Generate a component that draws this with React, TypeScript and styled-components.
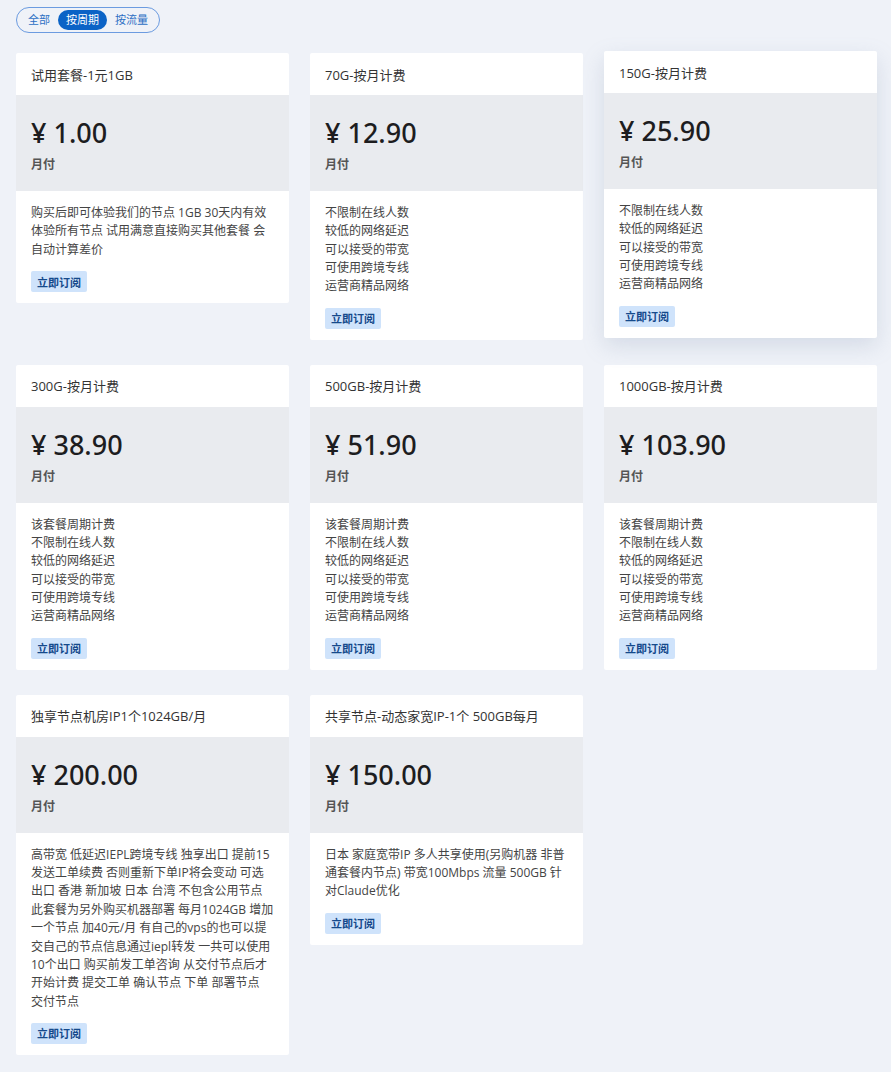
import React from "react";
import styled, { createGlobalStyle } from "styled-components";

const Global = createGlobalStyle`
  html, body { margin: 0; padding: 0; background: #eff2f8; }
  body { font-family: "Segoe UI", "Open Sans", "Noto Sans CJK SC", sans-serif; color: #333; }
  * { box-sizing: border-box; }
`;

const Page = styled.div`
  padding: 7px 14px 16px 16px;
  min-height: 1072px;
`;

const Tabs = styled.div`
  display: inline-flex;
  align-items: center;
  height: 26px;
  padding: 0 3px;
  border: 1px solid #6b9be0;
  border-radius: 13px;
`;

const Tab = styled.button<{ $active?: boolean }>`
  border: none;
  height: 20px;
  padding: 0 8px;
  border-radius: 10px;
  font-family: inherit;
  font-size: 11px;
  line-height: 20px;
  cursor: pointer;
  background: ${(p) => (p.$active ? "#0b63c6" : "transparent")};
  color: ${(p) => (p.$active ? "#fff" : "#2c6fc4")};
`;

const Grid = styled.div`
  margin-top: 20px;
  display: grid;
  grid-template-columns: repeat(3, 273px);
  column-gap: 21px;
  row-gap: 25px;
  align-items: start;
`;

const Card = styled.div<{ $raised?: boolean }>`
  background: #fff;
  border-radius: 2px;
  overflow: hidden;
  transform: ${(p) => (p.$raised ? "translateY(-2px)" : "none")};
  box-shadow: ${(p) =>
    p.$raised ? "0 8px 22px rgba(120, 135, 170, 0.22)" : "none"};
`;

const Header = styled.div`
  height: 42px;
  display: flex;
  align-items: center;
  padding: 0 15px;
  font-size: 13px;
  color: #333;
`;

const PriceBox = styled.div`
  background: #e9ebef;
  padding: 20px 15px 17px;
`;

const Price = styled.div`
  font-family: "Noto Sans", "Open Sans", sans-serif;
  font-size: 27px;
  line-height: 36px;
  color: #1d1d1f;
  font-weight: 500;
`;

const Cycle = styled.div`
  margin-top: 5px;
  font-size: 12px;
  line-height: 18px;
  font-weight: 600;
  color: #555;
`;

const Body = styled.div`
  padding: 13px 15px 11px;
`;

const Desc = styled.div`
  font-size: 12px;
  line-height: 18.35px;
  color: #444;
  white-space: pre-line;
`;

const Subscribe = styled.button`
  margin-top: 12px;
  display: block;
  height: 21px;
  padding: 0 6px;
  border: none;
  border-radius: 2px;
  background: #cfe3fb;
  color: #154a8c;
  font-family: inherit;
  font-size: 11px;
  font-weight: 700;
  cursor: pointer;
`;

type Plan = { title: string; price: string; desc: string; raised?: boolean };

const standard = "不限制在线人数\n较低的网络延迟\n可以接受的带宽\n可使用跨境专线\n运营商精品网络";
const periodic = "该套餐周期计费\n" + standard;

const plans: Plan[] = [
  {
    title: "试用套餐-1元1GB",
    price: "¥ 1.00",
    desc: "购买后即可体验我们的节点 1GB 30天内有效\n体验所有节点 试用满意直接购买其他套餐 会\n自动计算差价",
  },
  { title: "70G-按月计费", price: "¥ 12.90", desc: standard },
  { title: "150G-按月计费", price: "¥ 25.90", desc: standard, raised: true },
  { title: "300G-按月计费", price: "¥ 38.90", desc: periodic },
  { title: "500GB-按月计费", price: "¥ 51.90", desc: periodic },
  { title: "1000GB-按月计费", price: "¥ 103.90", desc: periodic },
  {
    title: "独享节点机房IP1个1024GB/月",
    price: "¥ 200.00",
    desc:
      "高带宽 低延迟IEPL跨境专线 独享出口 提前15\n发送工单续费 否则重新下单IP将会变动 可选\n出口 香港 新加坡 日本 台湾 不包含公用节点\n此套餐为另外购买机器部署 每月1024GB 增加\n一个节点 加40元/月 有自己的vps的也可以提\n交自己的节点信息通过iepl转发 一共可以使用\n10个出口 购买前发工单咨询 从交付节点后才\n开始计费 提交工单 确认节点 下单 部署节点\n交付节点",
  },
  {
    title: "共享节点-动态家宽IP-1个 500GB每月",
    price: "¥ 150.00",
    desc: "日本 家庭宽带IP 多人共享使用(另购机器 非普\n通套餐内节点) 带宽100Mbps 流量 500GB 针\n对Claude优化",
  },
];

export default function App() {
  return (
    <Page>
      <Global />
      <Tabs>
        <Tab>全部</Tab>
        <Tab $active>按周期</Tab>
        <Tab>按流量</Tab>
      </Tabs>
      <Grid>
        {plans.map((p) => (
          <Card key={p.title} $raised={p.raised}>
            <Header>{p.title}</Header>
            <PriceBox>
              <Price>{p.price}</Price>
              <Cycle>月付</Cycle>
            </PriceBox>
            <Body>
              <Desc>{p.desc}</Desc>
              <Subscribe>立即订阅</Subscribe>
            </Body>
          </Card>
        ))}
      </Grid>
    </Page>
  );
}
